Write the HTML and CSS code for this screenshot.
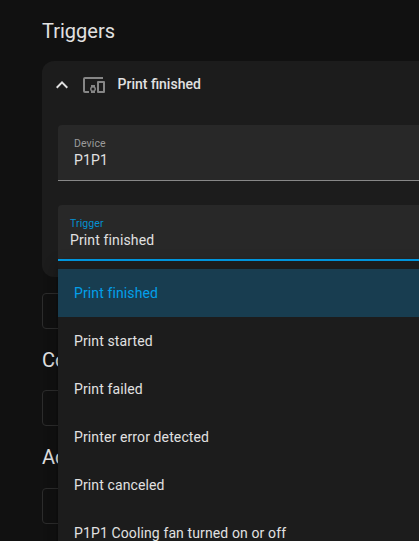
FILE: index.html
```html
<!DOCTYPE html>
<html lang="en">
<head>
<meta charset="utf-8">
<title>Automation editor</title>
<link rel="stylesheet" href="styles.css">
</head>
<body>
<main class="editor">
  <h2 class="heading">Triggers</h2>
  <section class="card">
    <header class="card-header">
      <svg class="icon chevron" viewBox="0 0 24 24"><path d="M7.41,15.41L12,10.83L16.59,15.41L18,14L12,8L6,14L7.41,15.41Z"/></svg>
      <svg class="icon devices" viewBox="0 0 24 24"><path d="M3 6H21V4H3A2 2 0 0 0 1 6V18A2 2 0 0 0 3 20H7V18H3V6M13 12H9V13.78C8.39 14.33 8 15.11 8 16C8 16.89 8.39 17.67 9 18.22V20H13V18.22C13.61 17.67 14 16.88 14 16S13.61 14.33 13 13.78V12M11 17.5A1.5 1.5 0 1 1 11 14.5A1.5 1.5 0 1 1 11 17.5M22 8H16A1 1 0 0 0 15 9V19A1 1 0 0 0 16 20H22A1 1 0 0 0 23 19V9A1 1 0 0 0 22 8M21 18H17V10H21V18Z"/></svg>
      <h3 class="card-title">Print finished</h3>
    </header>
    <div class="field">
      <span class="label">Device</span>
      <span class="value">P1P1</span>
    </div>
    <div class="field active">
      <span class="label">Trigger</span>
      <span class="value">Print finished</span>
      <ul class="menu">
        <li class="item selected">Print finished</li>
        <li class="item">Print started</li>
        <li class="item">Print failed</li>
        <li class="item">Printer error detected</li>
        <li class="item">Print canceled</li>
        <li class="item">P1P1 Cooling fan turned on or off</li>
      </ul>
    </div>
  </section>
  <div class="add-button"></div>
  <h2 class="heading section-heading">Conditions</h2>
  <div class="add-button"></div>
  <h2 class="heading section-heading">Actions</h2>
  <div class="add-button last"></div>
</main>
</body>
</html>
```
FILE: styles.css
```css
* {
  box-sizing: border-box;
}

body {
  margin: 0;
  height: 541px;
  overflow: hidden;
  background: #111111;
  color: #e1e1e1;
  font-family: Roboto, "Liberation Sans", sans-serif;
}

.editor {
  padding: 17px 0 0 42px;
}

.heading {
  margin: 0 0 16px;
  font-size: 20px;
  font-weight: 400;
  line-height: 28px;
}

.card {
  height: 216px;
  padding: 0 0 16px 16px;
  border-radius: 12px 0 0 12px;
  background: #1c1c1c;
}

.card-header {
  display: flex;
  align-items: center;
  height: 48px;
  margin: 0 0 16px -8px;
}

.icon {
  width: 24px;
  height: 24px;
  flex: none;
}

.chevron {
  fill: #e1e1e1;
}

.devices {
  margin: 0 11.5px 0 8px;
  fill: #868686;
}

.card-title {
  margin: 0;
  padding-bottom: 2px;
  font-size: 14px;
  font-weight: 500;
  line-height: 20px;
}

.field {
  position: relative;
  display: flex;
  flex-direction: column;
  height: 56px;
  margin-bottom: 24px;
  padding: 11px 0 0 16px;
  border-bottom: 1px solid #878787;
  border-radius: 4px 0 0 0;
  background: #282828;
}

.label {
  color: #9b9b9b;
  font-size: 10.5px;
  line-height: 15px;
  letter-spacing: 0.1px;
}

.value {
  font-size: 14px;
  line-height: 18px;
  letter-spacing: 0.13px;
}

.active {
  padding-left: 12px;
  border-bottom: 2px solid #009ee8;
}

.active .label {
  color: #0591d1;
}

.menu {
  position: absolute;
  top: 56px;
  left: 0;
  right: 0;
  z-index: 1;
  margin: 0;
  padding: 8px 0;
  list-style: none;
  background: #1c1c1c;
  box-shadow: 0 5px 5px -3px rgba(0, 0, 0, 0.2), 0 8px 10px 1px rgba(0, 0, 0, 0.14), 0 3px 14px 2px rgba(0, 0, 0, 0.12);
}

.item {
  height: 48px;
  padding-left: 16px;
  font-size: 14px;
  line-height: 48px;
  letter-spacing: 0.12px;
}

.selected {
  background: #183d50;
  color: #03a0ea;
}

.add-button {
  width: 140px;
  height: 36px;
  margin-top: 16px;
  border: 1px solid #2c2c2c;
  border-radius: 4px;
}

.last {
  margin-top: 17px;
}

.section-heading {
  margin: 17px 0 16px;
}
```
